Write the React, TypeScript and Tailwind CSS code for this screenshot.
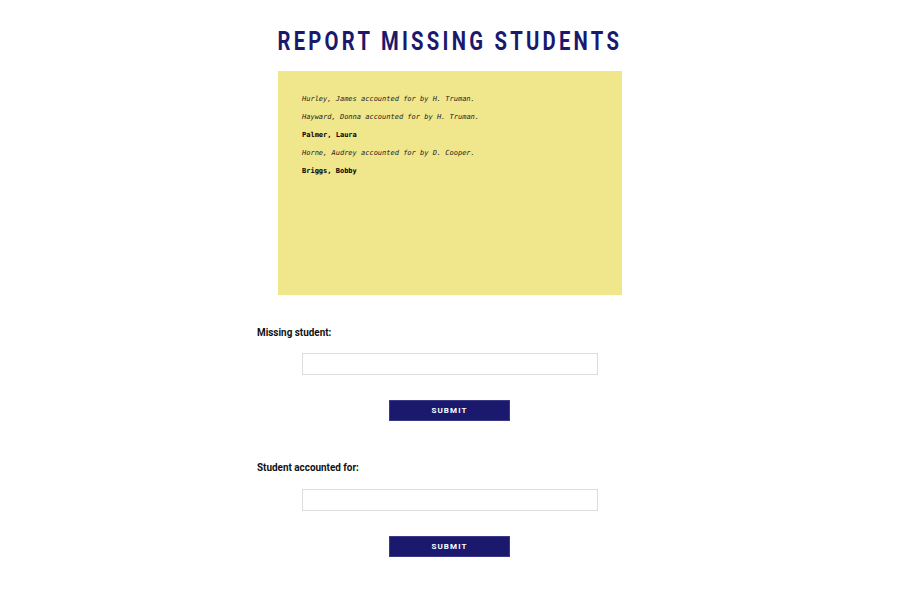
import { useState } from "react";

const entries = [
  { name: "Hurley, James", by: "H. Truman" },
  { name: "Hayward, Donna", by: "H. Truman" },
  { name: "Palmer, Laura", by: "" },
  { name: "Horne, Audrey", by: "D. Cooper" },
  { name: "Briggs, Bobby", by: "" },
];

function StudentForm({ label, gap }: { label: string; gap: string }) {
  const [value, setValue] = useState("");
  return (
    <form
      className="flex flex-col items-start"
      onSubmit={(e) => {
        e.preventDefault();
        setValue("");
      }}
    >
      <label className="h-4 origin-left scale-x-[0.9] text-[11px] leading-4 font-bold whitespace-nowrap text-[#111]">
        {label}
      </label>
      <input
        value={value}
        onChange={(e) => setValue(e.target.value)}
        className={`${gap} ml-[45px] h-[22px] w-[296px] border border-[#dcdcdc] bg-white px-2 text-xs outline-none`}
      />
      <button
        type="submit"
        className="mt-[25px] ml-[132px] h-[21px] w-[121px] border border-[#3b3a86] bg-[#1a196e] text-[8px] font-bold tracking-[1.1px] text-white"
      >
        SUBMIT
      </button>
    </form>
  );
}

export default function App() {
  return (
    <div className="flex min-h-screen justify-center bg-white font-['Roboto',sans-serif]">
      <div className="flex w-[386px] flex-col pt-[27px]">
        <div className="flex justify-center">
          <h1 className="scale-x-[0.81] text-[25px] leading-[30px] font-bold tracking-[4px] whitespace-nowrap text-[#1a196e]">
            REPORT MISSING STUDENTS
          </h1>
        </div>

        <div className="mt-[14px] ml-[21px] h-[224px] w-[344px] bg-[#f0e68c] px-6 pt-[19px] font-['DejaVu_Sans_Mono',monospace] text-[7px]">
          {entries.map((s) =>
            s.by ? (
              <p key={s.name} className="leading-[18px] italic text-[#222]">
                {s.name} accounted for by {s.by}.
              </p>
            ) : (
              <p key={s.name} className="leading-[18px] font-bold text-black">
                {s.name}
              </p>
            )
          )}
        </div>

        <div className="mt-[30px]">
          <StudentForm label="Missing student:" gap="mt-[12px]" />
        </div>
        <div className="mt-[39px]">
          <StudentForm label="Student accounted for:" gap="mt-[13px]" />
        </div>
      </div>
    </div>
  );
}
